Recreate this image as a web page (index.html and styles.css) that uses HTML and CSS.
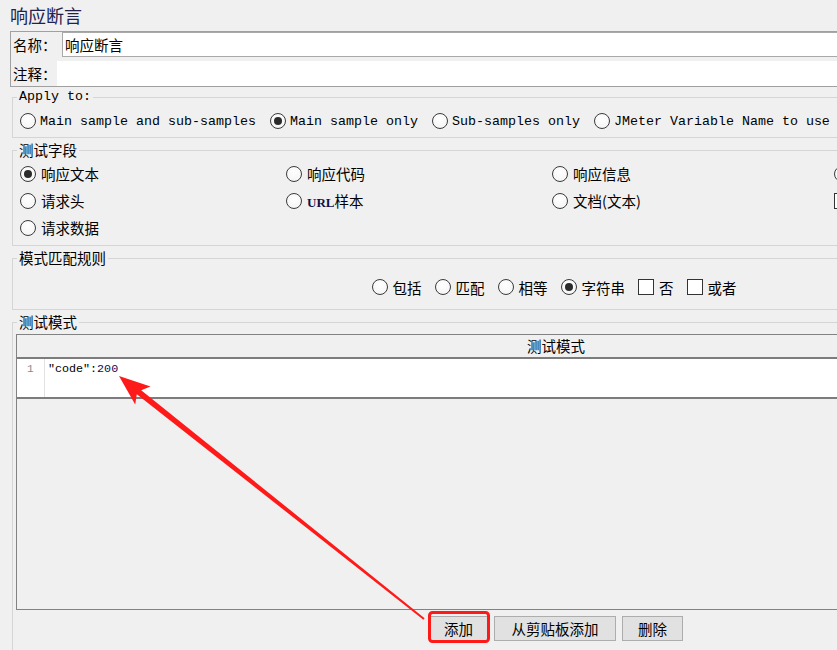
FILE: index.html
```html
<!DOCTYPE html>
<html lang="zh-CN">
<head>
<meta charset="utf-8">
<title>响应断言</title>
<link rel="stylesheet" href="styles.css">
</head>
<body>
<div class="page">
  <div class="title">响应断言</div>

  <div class="name-panel">
    <div class="field-row">
      <span class="field-label">名称：</span>
      <div class="text-input">响应断言</div>
    </div>
    <div class="field-row">
      <span class="field-label narrow">注释：</span>
      <div class="text-area"></div>
    </div>
  </div>

  <fieldset class="group apply">
    <legend class="mono">Apply to:</legend>
    <div class="apply-row mono">
      <label class="opt"><span class="radio"></span><span>Main sample and sub-samples</span></label>
      <label class="opt"><span class="radio on"></span><span>Main sample only</span></label>
      <label class="opt"><span class="radio"></span><span>Sub-samples only</span></label>
      <label class="opt"><span class="radio"></span><span>JMeter Variable Name to use</span></label>
    </div>
  </fieldset>

  <fieldset class="group fields">
    <legend>测试字段</legend>
    <div class="field-grid">
      <label class="opt"><span class="radio on"></span><span>响应文本</span></label>
      <label class="opt"><span class="radio"></span><span>响应代码</span></label>
      <label class="opt"><span class="radio"></span><span>响应信息</span></label>
      <label class="opt"><span class="radio"></span></label>
      <label class="opt"><span class="radio"></span><span>请求头</span></label>
      <label class="opt"><span class="radio"></span><span><b class="latin">URL</b>样本</span></label>
      <label class="opt"><span class="radio"></span><span>文档(文本)</span></label>
      <label class="opt"><span class="check"></span></label>
      <label class="opt"><span class="radio"></span><span>请求数据</span></label>
    </div>
  </fieldset>

  <fieldset class="group rules">
    <legend>模式匹配规则</legend>
    <div class="rule-row">
      <label class="opt"><span class="radio"></span><span>包括</span></label>
      <label class="opt"><span class="radio"></span><span>匹配</span></label>
      <label class="opt"><span class="radio"></span><span>相等</span></label>
      <label class="opt"><span class="radio on"></span><span>字符串</span></label>
      <label class="opt"><span class="check"></span><span>否</span></label>
      <label class="opt"><span class="check"></span><span>或者</span></label>
    </div>
  </fieldset>

  <fieldset class="group patterns">
    <legend>测试模式</legend>
    <div class="table">
      <div class="table-head">测试模式</div>
      <div class="editor">
        <div class="gutter">1</div>
        <div class="code">"code":<span class="num">200</span></div>
      </div>
      <div class="table-body"></div>
    </div>
    <div class="buttons">
      <button class="btn w-add">添加</button>
      <button class="btn w-paste">从剪贴板添加</button>
      <button class="btn w-del">删除</button>
    </div>
  </fieldset>
</div>

<svg class="annot" width="837" height="650" viewBox="0 0 837 650" xmlns="http://www.w3.org/2000/svg">
  <rect x="429.5" y="612.5" width="59" height="29" rx="3" ry="3" fill="none" stroke="#ff1a1a" stroke-width="3"/>
  <polygon fill="#ff1a1a" points="119,376 150.5,386.5 141.2,390.2 424.6,618.2 423.4,619.8 136.8,394.2 135.2,404.5"/>
</svg>
</body>
</html>
```

FILE: styles.css
```css
html, body {
  margin: 0;
  padding: 0;
  overflow: hidden;
  background: #f0f0f0;
}

body {
  width: 837px;
  height: 650px;
  font-family: "Noto Sans CJK SC", "Noto Sans", sans-serif;
  font-size: 14.5px;
  color: #000;
}

.page {
  width: 1100px;
  box-sizing: border-box;
  padding-left: 10px;
}

.title {
  height: 31px;
  line-height: 30px;
  font-size: 18px;
  color: #22224f;
}

/* name / comment panel */
.name-panel {
  border: 1px solid #a0a0a0;
  display: flex;
  flex-direction: column;
  gap: 4px;
}

.field-row {
  display: flex;
  height: 25px;
}

.field-label {
  width: 49px;
  padding-left: 2px;
  line-height: 25px;
  flex: none;
}

.field-label.narrow {
  width: 44px;
}

.text-input {
  flex: 1;
  box-sizing: border-box;
  border: 1px solid #a9a9a9;
  border-right: none;
  background: #fff;
  line-height: 23px;
  padding-left: 2px;
}

.text-area {
  flex: 1;
  background: #fff;
}

/* group boxes */
.group {
  margin: 4px 0 0 2px;
  padding: 0 3px 0 7px;
  border: 1px solid #d5d5d5;
  min-width: 0;
}

.group legend {
  margin-left: -3px;
  padding: 0 2px;
  line-height: 16px;
  font-size: 14.5px;
}

.mono {
  font-family: "Liberation Mono", "DejaVu Sans Mono", monospace;
  font-size: 13.33px;
}

.group legend.mono {
  font-size: 13.33px;
}

.apply {
  margin-top: 2px;
  padding-top: 5px;
  padding-bottom: 5px;
}

.apply-row {
  display: flex;
  gap: 14px;
  height: 22px;
  align-items: center;
}

.apply-row .opt {
  gap: 4px;
}

.opt {
  display: flex;
  align-items: center;
  gap: 5px;
  white-space: nowrap;
}

.radio {
  width: 14px;
  height: 14px;
  border: 1px solid #3a3a3a;
  border-radius: 50%;
  background: radial-gradient(circle at 50% 35%, #ffffff 0%, #f2f2f2 100%);
  flex: none;
  position: relative;
  box-sizing: content-box;
}

.radio.on::after {
  content: "";
  position: absolute;
  left: 3px;
  top: 3px;
  width: 8px;
  height: 8px;
  border-radius: 50%;
  background: #2b2b2b;
}

.check {
  width: 14px;
  height: 14px;
  border: 1px solid #333;
  background: #fff;
  flex: none;
}

.fields {
  padding-top: 2px;
  padding-bottom: 4px;
}

.field-grid {
  display: grid;
  grid-template-columns: 266px 266px 282px 266px;
  grid-auto-rows: 27px;
  align-items: center;
}

.latin {
  font-family: "Liberation Serif", serif;
  font-weight: bold;
  font-size: 13px;
  color: #10104a;
}

.rules {
  padding-top: 10px;
  padding-bottom: 11px;
}

.rule-row {
  display: flex;
  justify-content: center;
  gap: 13px;
  height: 22px;
  align-items: center;
  padding-right: 8px;
}

.rule-row .opt {
  gap: 5px;
}

.patterns {
  padding: 4px 3px 40px 3px;
}

.patterns legend {
  margin-left: 1px;
}

.table {
  border: 1px solid #828282;
  display: flex;
  flex-direction: column;
}

.table-head {
  height: 22px;
  line-height: 22px;
  text-align: center;
  background: #f0f0f0;
}

.editor {
  display: flex;
  height: 38px;
  background: #fff;
  border-top: 2px solid #7c7c7c;
  border-bottom: 2px solid #7c7c7c;
}

.gutter {
  width: 28px;
  border-right: 1px solid #e2e2e2;
  box-sizing: border-box;
  padding-left: 10px;
  padding-top: 2px;
  font-family: "Liberation Mono", monospace;
  font-size: 11px;
  color: #8a8a8a;
  line-height: 16px;
}

.code {
  padding-left: 3px;
  padding-top: 2px;
  font-family: "Liberation Mono", "DejaVu Sans Mono", monospace;
  font-size: 11.7px;
  line-height: 16px;
  color: #000;
}

.num {
  color: #0a0a60;
}

.table-body {
  height: 210px;
  background: #f0f0f0;
}

.buttons {
  display: flex;
  justify-content: center;
  gap: 6px;
  margin-top: 6px;
}

.btn {
  height: 25px;
  box-sizing: border-box;
  border: 1px solid #adadad;
  background: #e1e1e1;
  font-family: "Noto Sans CJK SC", sans-serif;
  font-size: 14.5px;
  padding: 0;
  line-height: 23px;
  color: #000;
}

.w-add { width: 59px; }
.w-paste { width: 122px; }
.w-del { width: 61px; }

.annot {
  position: absolute;
  left: 0;
  top: 0;
  pointer-events: none;
}
```
